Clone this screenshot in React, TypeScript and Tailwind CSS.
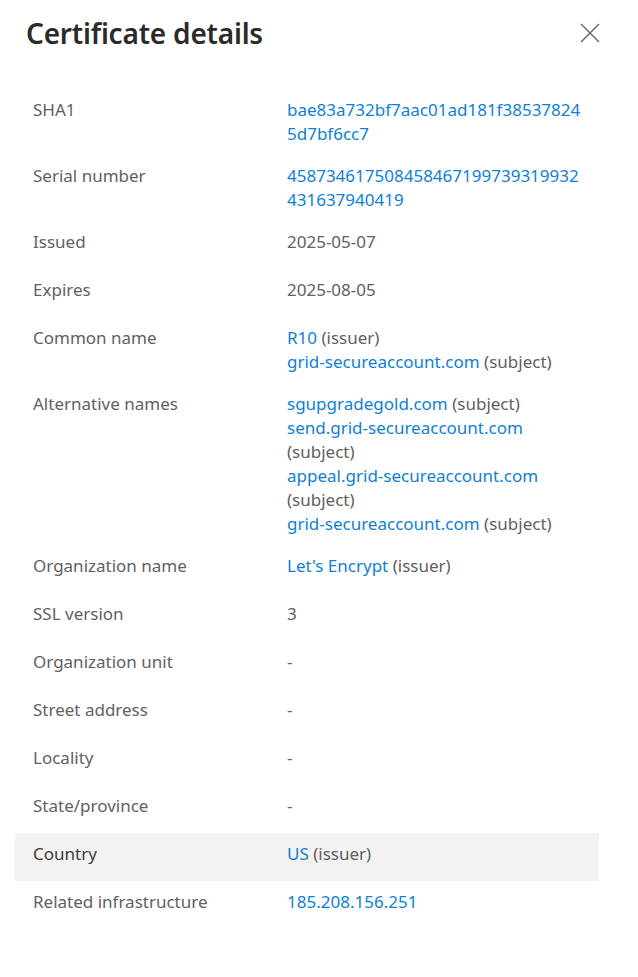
type Part = { text: string; link?: boolean };

const ROWS: { label: string; lines: Part[][]; active?: boolean }[] = [
  {
    label: "SHA1",
    lines: [[{ text: "bae83a732bf7aac01ad181f38537824", link: true }], [{ text: "5d7bf6cc7", link: true }]],
  },
  {
    label: "Serial number",
    lines: [[{ text: "458734617508458467199739319932", link: true }], [{ text: "431637940419", link: true }]],
  },
  { label: "Issued", lines: [[{ text: "2025-05-07" }]] },
  { label: "Expires", lines: [[{ text: "2025-08-05" }]] },
  {
    label: "Common name",
    lines: [
      [{ text: "R10", link: true }, { text: " (issuer)" }],
      [{ text: "grid-secureaccount.com", link: true }, { text: " (subject)" }],
    ],
  },
  {
    label: "Alternative names",
    lines: [
      [{ text: "sgupgradegold.com", link: true }, { text: " (subject)" }],
      [{ text: "send.grid-secureaccount.com", link: true }],
      [{ text: "(subject)" }],
      [{ text: "appeal.grid-secureaccount.com", link: true }],
      [{ text: "(subject)" }],
      [{ text: "grid-secureaccount.com", link: true }, { text: " (subject)" }],
    ],
  },
  { label: "Organization name", lines: [[{ text: "Let's Encrypt", link: true }, { text: " (issuer)" }]] },
  { label: "SSL version", lines: [[{ text: "3" }]] },
  { label: "Organization unit", lines: [[{ text: "-" }]] },
  { label: "Street address", lines: [[{ text: "-" }]] },
  { label: "Locality", lines: [[{ text: "-" }]] },
  { label: "State/province", lines: [[{ text: "-" }]] },
  { label: "Country", lines: [[{ text: "US", link: true }, { text: " (issuer)" }]], active: true },
  { label: "Related infrastructure", lines: [[{ text: "185.208.156.251", link: true }]] },
];

export default function App() {
  return (
    <div className="min-h-[977px] w-[638px] bg-white font-['Noto_Sans',sans-serif] text-[#323130]">
      <div className="flex items-center justify-between pl-[26px] pr-[38px] pt-[13px]">
        <h1 className="text-[28px] font-semibold leading-[40px] tracking-[-0.2px] text-[#2b2b2b]">
          Certificate details
        </h1>
        <svg width="20" height="20" viewBox="0 0 20 20" className="text-[#6b6b6b]">
          <path d="M1 1L19 19M19 1L1 19" stroke="currentColor" strokeWidth="1.5" fill="none" />
        </svg>
      </div>

      <div className="mt-[36px] px-[15px] pr-[39px]">
        {ROWS.map((r) => (
          <div
            key={r.label}
            className={`grid min-h-[48px] grid-cols-[254px_1fr] pb-[9px] pl-[18px] pt-[9px] text-[17px] leading-[24px] ${
              r.active ? "bg-[#f3f2f1]" : ""
            }`}
          >
            <div className={r.active ? "text-[#3b3b3b]" : "text-[#616161]"}>{r.label}</div>
            <div className="text-[#606060]">
              {r.lines.map((line, i) => (
                <div key={i} className="whitespace-nowrap">
                  {line.map((p, j) => (
                    <span key={j} className={p.link ? "text-[#0f7fd6]" : ""}>
                      {p.text}
                    </span>
                  ))}
                </div>
              ))}
            </div>
          </div>
        ))}
      </div>
    </div>
  );
}
